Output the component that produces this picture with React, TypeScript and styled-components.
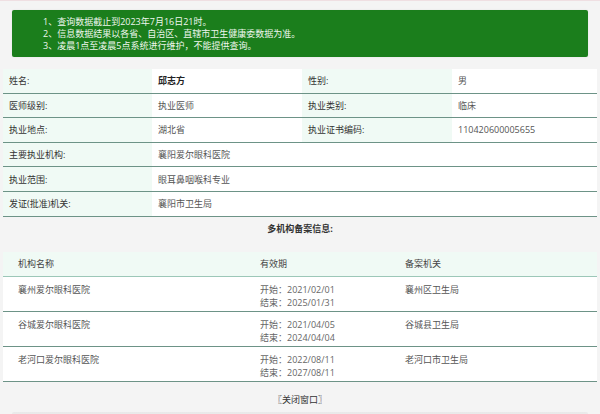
import React from "react";
import styled, { createGlobalStyle } from "styled-components";

const Global = createGlobalStyle`
  html, body { margin: 0; padding: 0; }
  body {
    background: #f4f4f4;
    font-family: "Open Sans", "Noto Sans CJK SC", sans-serif;
    font-size: 9px;
    color: #333;
  }
`;

const Page = styled.div`
  border-top: 1px solid #efdfe2;
  width: 600px;
  display: flex;
  flex-direction: column;
  & > * { flex-shrink: 0; }
`;

const Notice = styled.div`
  margin: 9px 12px 0 12px;
  height: 47px;
  box-sizing: border-box;
  padding: 6px 0 0 31px;
  background: #1b7e1c;
  border-radius: 2px;
  color: #eef6ee;
  line-height: 12px;
  font-size: 9px;
  box-shadow: 0 0 2px rgba(0, 0, 0, 0.08);
`;

const InfoTable = styled.div`
  margin: 12px 3px 0 3px;
  display: flex;
  flex-direction: column;
`;

const InfoRow = styled.div`
  display: grid;
  grid-template-columns: 149px 150px 150px 1fr;
  height: 23.6px;
  border-bottom: 1px solid #6d9387;
`;

const Label = styled.div`
  background: #f0faf5;
  padding-left: 6px;
  display: flex;
  align-items: center;
  color: #333;
`;

const Value = styled.div<{ $bold?: boolean; $span?: number }>`
  background: #ffffff;
  padding-left: 6px;
  display: flex;
  align-items: center;
  color: ${(p) => (p.$bold ? "#222" : "#555")};
  font-weight: ${(p) => (p.$bold ? 700 : 400)};
  grid-column: ${(p) => (p.$span ? `span ${p.$span}` : "auto")};
`;

const SectionTitle = styled.div`
  margin: 0 3px;
  height: 24px;
  display: flex;
  align-items: center;
  justify-content: center;
  font-weight: 700;
  color: #333;
`;

const OrgTable = styled.div`
  margin: 11px 3px 0 3px;
  display: flex;
  flex-direction: column;
`;

const OrgRow = styled.div<{ $head?: boolean }>`
  display: grid;
  grid-template-columns: 242px 145px 1fr;
  height: ${(p) => (p.$head ? "24px" : "34px")};
  border-bottom: 1px solid ${(p) => (p.$head ? "#9cc7b8" : "#6d9387")};
  background: ${(p) => (p.$head ? "#f0faf5" : "#ffffff")};
  align-items: ${(p) => (p.$head ? "center" : "start")};
`;

const Cell = styled.div<{ $head?: boolean }>`
  padding-left: 15px;
  padding-top: ${(p) => (p.$head ? "0" : "6px")};
  line-height: 13px;
  color: ${(p) => (p.$head ? "#444" : "#555")};
`;

const DateLine = styled.div`
  color: #666;
  line-height: 13px;
`;

const CloseBar = styled.div`
  height: 30px;
  box-sizing: border-box;
  padding-top: 11px;
  line-height: 13px;
  text-align: center;
  color: #333;
`;

const BottomStrip = styled.div`
  margin: 0 12px;
  height: 12px;
  background: linear-gradient(#e9e9e9, #efefef);
  border-radius: 2px 2px 0 0;
`;

const info = [
  [
    { label: "姓名:", value: "邱志方", bold: true },
    { label: "性别:", value: "男" },
  ],
  [
    { label: "医师级别:", value: "执业医师" },
    { label: "执业类别:", value: "临床" },
  ],
  [
    { label: "执业地点:", value: "湖北省" },
    { label: "执业证书编码:", value: "110420600005655" },
  ],
];

const wide = [
  { label: "主要执业机构:", value: "襄阳爱尔眼科医院" },
  { label: "执业范围:", value: "眼耳鼻咽喉科专业" },
  { label: "发证(批准)机关:", value: "襄阳市卫生局" },
];

const orgs = [
  { name: "襄州爱尔眼科医院", start: "2021/02/01", end: "2025/01/31", org: "襄州区卫生局" },
  { name: "谷城爱尔眼科医院", start: "2021/04/05", end: "2024/04/04", org: "谷城县卫生局" },
  { name: "老河口爱尔眼科医院", start: "2022/08/11", end: "2027/08/11", org: "老河口市卫生局" },
];

export default function App() {
  return (
    <>
      <Global />
      <Page>
        <Notice>
          <div>1、查询数据截止到2023年7月16日21时。</div>
          <div>2、信息数据结果以各省、自治区、直辖市卫生健康委数据为准。</div>
          <div>3、凌晨1点至凌晨5点系统进行维护，不能提供查询。</div>
        </Notice>
        <InfoTable>
          {info.map((row, i) => (
            <InfoRow key={i}>
              {row.map((c, j) => (
                <React.Fragment key={j}>
                  <Label>{c.label}</Label>
                  <Value $bold={(c as any).bold}>{c.value}</Value>
                </React.Fragment>
              ))}
            </InfoRow>
          ))}
          {wide.map((c, i) => (
            <InfoRow key={"w" + i}>
              <Label>{c.label}</Label>
              <Value $span={3}>{c.value}</Value>
            </InfoRow>
          ))}
        </InfoTable>
        <SectionTitle>多机构备案信息:</SectionTitle>
        <OrgTable>
          <OrgRow $head>
            <Cell $head>机构名称</Cell>
            <Cell $head>有效期</Cell>
            <Cell $head>备案机关</Cell>
          </OrgRow>
          {orgs.map((o, i) => (
            <OrgRow key={i}>
              <Cell>{o.name}</Cell>
              <Cell>
                <DateLine>开始：{o.start}</DateLine>
                <DateLine>结束：{o.end}</DateLine>
              </Cell>
              <Cell>{o.org}</Cell>
            </OrgRow>
          ))}
        </OrgTable>
        <CloseBar>〖关闭窗口〗</CloseBar>
        <BottomStrip />
      </Page>
    </>
  );
}
